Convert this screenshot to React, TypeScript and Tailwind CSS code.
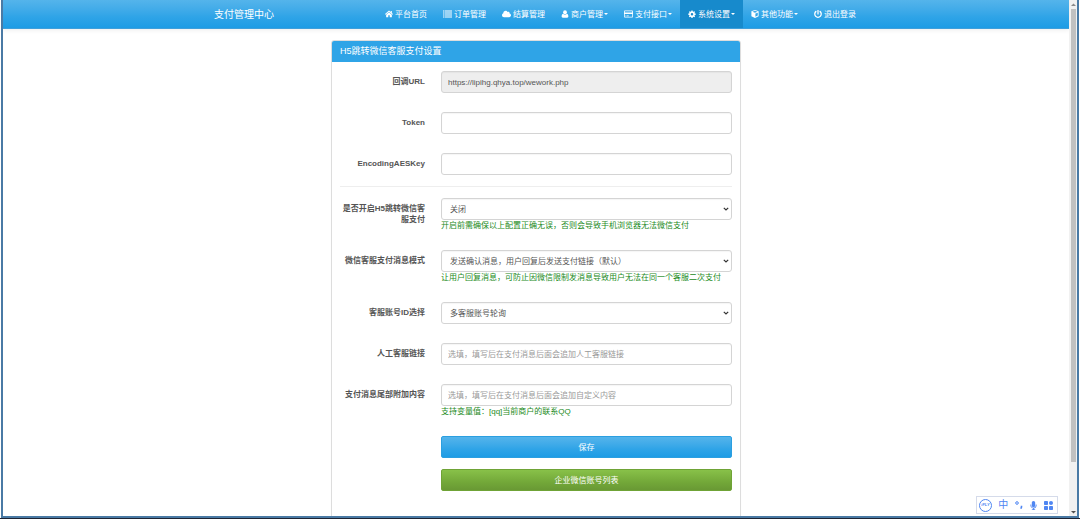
import { useState } from "react";
import type { ComponentType, ReactNode } from "react";
import { FaCloud, FaMicrophone, FaPowerOff } from "react-icons/fa";

type NavItem = {
  label: string;
  icon: ComponentType<{ className?: string }>;
  wide?: boolean;
  dropdown?: boolean;
  active?: boolean;
};

const navItems: NavItem[] = [
  { label: "平台首页", icon: HomeIcon },
  { label: "订单管理", icon: ListIcon, wide: true },
  { label: "结算管理", icon: FaCloud, wide: true },
  { label: "商户管理", icon: UserIcon, dropdown: true },
  { label: "支付接口", icon: CardIcon, wide: true, dropdown: true },
  { label: "系统设置", icon: CogIcon, dropdown: true, active: true },
  { label: "其他功能", icon: CubeIcon, dropdown: true },
  { label: "退出登录", icon: FaPowerOff },
];

export default function App() {
  return (
    <div className="h-screen overflow-hidden bg-[#1c2333] pb-px font-['Liberation_Sans','Noto_Sans_CJK_SC',sans-serif] text-[8px] leading-[11px] text-[#555555]">
      <div className="flex h-full bg-white px-px">
        <div className="relative flex h-full w-full border-x-2 border-b-2 border-[#4a7aa5]">
          <div className="min-w-0 flex-1 overflow-hidden">
            <Navbar />
            <main className="mx-auto mt-[11px] max-w-[410px]">
              <SettingsPanel />
            </main>
          </div>
          <Scrollbar />
          <InputToolbar />
        </div>
      </div>
    </div>
  );
}

// ----- Top navigation -----
function Navbar() {
  return (
    <header className="border-b border-[#3f9fdb] bg-linear-to-b from-[#54b4eb] via-[#2fa4e7] via-60% to-[#1d9ce5] text-white shadow-[0_1px_5px_rgba(0,0,0,0.08)]">
      <div className="mx-auto flex h-7 max-w-[656px] items-stretch justify-between">
        <a href="#home" className="flex items-center px-1.5 text-[10px]">
          支付管理中心
        </a>
        <nav className="flex">
          {navItems.map((item) => (
            <NavLink key={item.label} {...item} />
          ))}
        </nav>
      </div>
    </header>
  );
}

function NavLink({ label, icon: Icon, wide, dropdown, active }: NavItem) {
  return (
    <a
      href="#nav"
      className={`flex items-center px-2 whitespace-nowrap ${active ? "bg-[#178acc]" : ""}`}
    >
      <Icon className={`mr-0.5 h-2 ${wide ? "w-[9px]" : "w-2"}`} />
      {label}
      {dropdown && (
        <svg viewBox="0 0 4 2" className="ml-px h-0.5 w-1 fill-white">
          <path d="M0 0h4L2 2z" />
        </svg>
      )}
    </a>
  );
}

// ----- Navigation icons -----
function HomeIcon({ className }: { className?: string }) {
  return (
    <svg viewBox="0 0 16 16" className={className} fill="currentColor">
      <path d="M8 1L0 8l1.2 1.3L8 3.4l6.800 5.900L16 8l-2.300-2V2h-2.200v2.100z" />
      <path d="M8 4.700L2.300 9.600V14.500h4.200v-4h3v4h4.200V9.600z" />
    </svg>
  );
}

function ListIcon({ className }: { className?: string }) {
  return (
    <svg viewBox="0 0 18 16" className={className} fill="currentColor">
      <path d="M0 1h2.500v2H0zM3.500 1H18v2H3.500zM0 5h2.500v2H0zM3.500 5H18v2H3.500zM0 9h2.500v2H0zM3.500 9H18v2H3.500zM0 13h2.500v2H0zM3.500 13H18v2H3.500z" />
    </svg>
  );
}

function UserIcon({ className }: { className?: string }) {
  return (
    <svg viewBox="0 0 16 16" className={className} fill="currentColor">
      <ellipse cx="8" cy="4.600" rx="3.800" ry="4.200" />
      <path d="M4.500 7.500C2 8 1.300 10.500 1.300 13c0 1.500 1 2.300 2.300 2.300h8.800c1.300 0 2.300-.8 2.300-2.300 0-2.500-.7-5-3.200-5.500C10 10.300 6 10.300 4.500 7.500z" />
    </svg>
  );
}

function CardIcon({ className }: { className?: string }) {
  return (
    <svg viewBox="0 0 18 16" className={className} fill="currentColor">
      <path
        fillRule="evenodd"
        d="M1.500 1h15A1.500 1.500 0 0 1 18 2.500v11a1.500 1.500 0 0 1-1.500 1.500h-15A1.500 1.500 0 0 1 0 13.500v-11A1.500 1.500 0 0 1 1.500 1zM1.500 2.500V5h15V2.500zM1.500 8v5.500h15V8z"
      />
      <path d="M3 11h2v1.300H3zM6 11h3.500v1.300H6z" />
    </svg>
  );
}

function CogIcon({ className }: { className?: string }) {
  return (
    <svg viewBox="0 0 16 16" className={className} fill="currentColor">
      <path
        fillRule="evenodd"
        d="M6.800 1h2.400l.4 2 1.200.5 1.700-1.200 1.700 1.700L13 5.700l.5 1.200 2 .3v2.400l-2 .3-.5 1.200 1.200 1.700-1.700 1.700-1.700-1.200-1.200.5-.4 2H6.800l-.4-2-1.200-.5-1.700 1.200-1.700-1.700L3 11.100l-.5-1.200-2-.3V7.200l2-.3L3 5.700 1.800 4l1.700-1.700 1.700 1.200L6.400 3zM8 5.900a2.500 2.500 0 1 0 0 5 2.500 2.500 0 0 0 0-5z"
      />
    </svg>
  );
}

function CubeIcon({ className }: { className?: string }) {
  return (
    <svg viewBox="0 0 16 16" className={className} fill="currentColor">
      <path
        fillRule="evenodd"
        d="M8 0l7.200 2.700v9.600L8 16 .8 12.300V2.700zM8 1.700L2.700 3.700 8 5.700l5.300-2zM8.800 7.200v6.500l4.800-2.500V5.400z"
      />
    </svg>
  );
}

// ----- Settings form -----
function SettingsPanel() {
  return (
    <section className="rounded-[3px] border border-[#dddddd] shadow-[0_1px_1px_rgba(0,0,0,0.05)]">
      <h1 className="rounded-t-[2px] bg-[#2fa4e7] px-2 py-1 text-[9px] leading-[13px] text-white">
        H5跳转微信客服支付设置
      </h1>
      <form
        className="space-y-[19px] px-2 pt-[9px] pb-12"
        onSubmit={(e) => e.preventDefault()}
      >
        <Row id="url" label="回调URL">
          <TextField id="url" value="https://lipihg.qhya.top/wework.php" readOnly />
        </Row>
        <Row id="token" label="Token">
          <TextField id="token" />
        </Row>
        <Row id="aeskey" label="EncodingAESKey">
          <TextField id="aeskey" />
        </Row>
        <hr className="-mt-2 mb-[11px] border-[#eeeeee]" />
        <Row
          id="enabled"
          label="是否开启H5跳转微信客服支付"
          help="开启前需确保以上配置正确无误，否则会导致手机浏览器无法微信支付"
        >
          <SelectField id="enabled" options={["关闭", "开启"]} />
        </Row>
        <Row
          id="mode"
          label="微信客服支付消息模式"
          help="让用户回复消息，可防止因微信限制发消息导致用户无法在同一个客服二次支付"
        >
          <SelectField
            id="mode"
            options={["发送确认消息，用户回复后发送支付链接（默认）"]}
          />
        </Row>
        <Row id="account" label="客服账号ID选择">
          <SelectField id="account" options={["多客服账号轮询"]} />
        </Row>
        <Row id="link" label="人工客服链接">
          <TextField id="link" placeholder="选填，填写后在支付消息后面会追加人工客服链接" />
        </Row>
        <Row
          id="suffix"
          label="支付消息尾部附加内容"
          help="支持变量值：[qq]当前商户的联系QQ"
        >
          <TextField id="suffix" placeholder="选填，填写后在支付消息后面会追加自定义内容" />
        </Row>
        <div className="ml-[101px] space-y-[11px]">
          <button
            type="submit"
            className="block h-[22px] w-full rounded-[2px] border border-[#2b9fe0] bg-linear-to-b from-[#54b4eb] via-[#2fa4e7] via-60% to-[#1d9ce5] text-white"
          >
            保存
          </button>
          <button
            type="button"
            className="block h-[22px] w-full rounded-[2px] border border-[#6fa336] bg-linear-to-b from-[#88c149] via-[#73a839] via-60% to-[#699934] text-white"
          >
            企业微信账号列表
          </button>
        </div>
      </form>
    </section>
  );
}

function Row({
  id,
  label,
  help,
  children,
}: {
  id: string;
  label: string;
  help?: string;
  children: ReactNode;
}) {
  return (
    <div className="grid grid-cols-[85px_1fr] gap-4">
      <label htmlFor={id} className="pt-[5px] text-right font-bold">
        {label}
      </label>
      <div>
        {children}
        {help && <p className="whitespace-nowrap text-[#1a8a1a]">{help}</p>}
      </div>
    </div>
  );
}

function TextField({
  id,
  value = "",
  placeholder,
  readOnly,
}: {
  id: string;
  value?: string;
  placeholder?: string;
  readOnly?: boolean;
}) {
  return (
    <input
      id={id}
      type="text"
      defaultValue={value}
      placeholder={placeholder}
      readOnly={readOnly}
      className="block h-[22px] w-full rounded-[3px] border border-[#d4d4d4] bg-white px-1.5 shadow-[inset_0_1px_1px_rgba(0,0,0,0.04)] placeholder:text-[#999999] read-only:bg-[#eeeeee]"
    />
  );
}

function SelectField({ id, options }: { id: string; options: string[] }) {
  const [value, setValue] = useState(options[0]);

  return (
    <div className="relative">
      <select
        id={id}
        value={value}
        onChange={(e) => setValue(e.target.value)}
        className="block h-[22px] w-full appearance-none rounded-[3px] border border-[#d4d4d4] bg-white px-2 shadow-[inset_0_1px_1px_rgba(0,0,0,0.04)]"
      >
        {options.map((option) => (
          <option key={option}>{option}</option>
        ))}
      </select>
      <svg
        viewBox="0 0 6 4"
        className="pointer-events-none absolute top-[9px] right-[3px] h-1 w-1.5 fill-none stroke-[#333333]"
      >
        <path d="M0.8 0.8L3 3L5.2 0.8" strokeWidth="1.2" />
      </svg>
    </div>
  );
}

// ----- Window scrollbar -----
function Scrollbar() {
  return (
    <div className="flex w-2 flex-col bg-[#f1f1f1]">
      <svg viewBox="0 0 8 9" className="h-[9px] w-full fill-[#8a8a8a]">
        <path d="M2 6L4.500 3.500L7 6z" />
      </svg>
      <div className="flex-1 pr-px pl-0.5">
        <div className="h-[91%] bg-[#c1c1c1]" />
      </div>
      <svg viewBox="0 0 8 9" className="h-[9px] w-full fill-[#505050]">
        <path d="M2 4L4.500 6.500L7 4z" />
      </svg>
    </div>
  );
}

// ----- Floating input method bar -----
function InputToolbar() {
  return (
    <div className="absolute right-[19px] bottom-0.5 flex h-[18px] w-[82px] items-center justify-between border border-[#d5dbea] bg-white px-0.5 text-[#4f86f2]">
      <button
        type="button"
        className="flex size-[13px] items-center justify-center rounded-full border border-[#4f86f2] text-[4px] leading-none font-bold italic"
      >
        iFLY
      </button>
      <button type="button" className="text-[10px] leading-none">
        中
      </button>
      <button type="button" aria-label="标点">
        <svg viewBox="0 0 8 8" className="size-2 fill-none stroke-[#4f86f2]">
          <circle cx="2" cy="2" r="1.3" />
          <path d="M6.500 4.800v1.200q0 1-1 1.500" strokeWidth="1.600" />
        </svg>
      </button>
      <button type="button" aria-label="语音">
        <FaMicrophone className="size-[9px]" />
      </button>
      <button type="button" aria-label="工具" className="mr-0.5">
        <svg viewBox="0 0 9 9" className="size-[9px] fill-[#4f86f2]">
          <rect width="4" height="4" rx="0.8" />
          <circle cx="7" cy="2" r="2" />
          <rect y="5" width="4" height="4" rx="0.8" />
          <rect x="5" y="5" width="4" height="4" rx="0.8" />
        </svg>
      </button>
    </div>
  );
}
